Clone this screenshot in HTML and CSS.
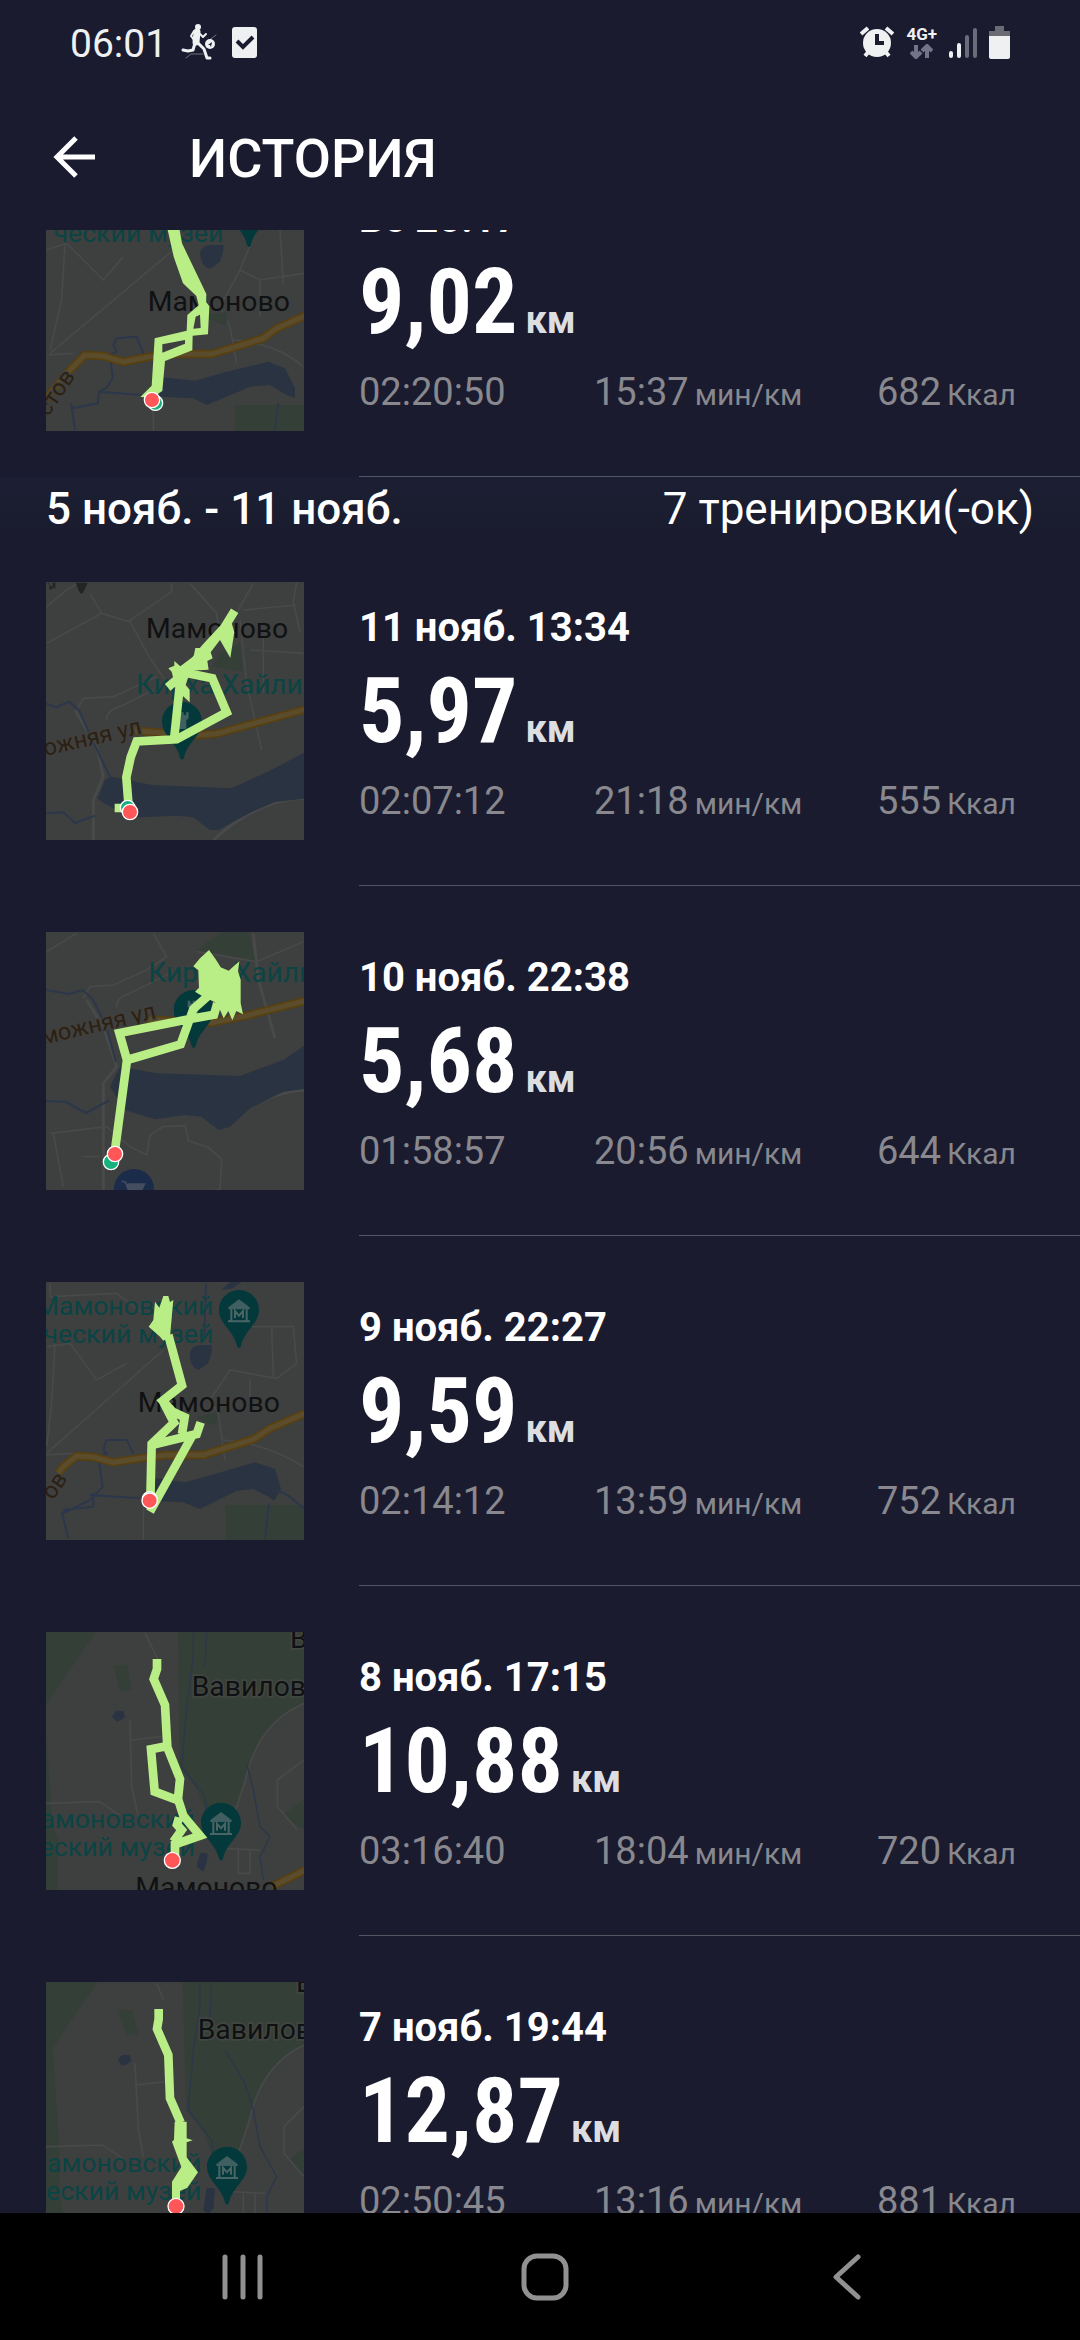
FILE: index.html
```html
<!DOCTYPE html>
<html lang="ru">
<head>
<meta charset="utf-8">
<meta name="viewport" content="width=device-width, initial-scale=1">
<title>История</title>
<link rel="stylesheet" href="styles.css">
</head>
<body>
<svg class="defs" aria-hidden="true">
  <defs>
    <symbol id="museum" viewBox="0 0 120 176">
      <path class="pin" d="M60 0C27 0 0 27 0 60c0 42 45 62 54 108q6 12 12 0C75 122 120 102 120 60 120 27 93 0 60 0z"/>
      <path class="pin-line" d="M27 94h66M37 92V56M83 92V56M48 84V63l12 14 12-14v21"/>
      <path class="pin-fill" d="M60 28 92 52v6H28v-6z"/>
    </symbol>
    <symbol id="rook" viewBox="0 0 120 176">
      <path class="pin" d="M60 0C27 0 0 27 0 60c0 42 45 62 54 108q6 12 12 0C75 122 120 102 120 60 120 27 93 0 60 0z"/>
      <path class="pin-fill" d="M42 32h8v8h7v-8h8v8h7v-8h8v18l-7 6v26H49V56l-7-6z"/>
    </symbol>
  </defs>
</svg>

<header class="top">
  <div class="status">
    <span class="clock">06:01</span>
    <svg class="i-run" viewBox="0 0 36 36" aria-hidden="true">
      <g fill="none" stroke="#eef0f2" stroke-linecap="round" stroke-linejoin="round">
        <path d="M16 8 15 18" stroke-width="7"/>
        <path d="m13 7-3 5 3 4M19 10l3 3 3-3" stroke-width="2"/>
        <path d="m17 19 6 6 3 9h3" stroke-width="3"/>
        <path d="m14 19-2 7-5 1-5-1" stroke-width="3"/>
        <path d="m27 17 8-6M5 34l5-4h12" stroke-width="1" opacity=".4"/>
      </g>
      <circle cx="17" cy="3" r="3" fill="#eef0f2"/>
      <circle cx="29" cy="20" r="5" fill="#eef0f2"/>
      <path d="m27 21 4-3-1 5-1-2z" fill="#1a1b2e"/>
    </svg>
    <svg class="i-check" viewBox="0 0 25 31" aria-hidden="true">
      <rect width="25" height="31" rx="3" fill="#eef0f2"/>
      <path d="m5 14 6 6L21 10" fill="none" stroke="#1a1b2e" stroke-width="4"/>
    </svg>
    <div class="status-right">
      <svg class="i-alarm" viewBox="0 0 34 32" aria-hidden="true">
        <g stroke="#eef0f2" stroke-width="4" fill="none"><path d="m1 8 7-6M26 2l7 6M5 30l5-6M29 30l-5-6"/></g>
        <circle cx="17" cy="17" r="14" fill="#eef0f2"/>
        <path d="M17 8v9h7" fill="none" stroke="#1a1b2e" stroke-width="4"/>
      </svg>
      <span class="net">4G+
        <svg class="i-updown" viewBox="0 0 23 15" aria-hidden="true"><path d="M6 1v12M1 8l5 5 5-5M17 14V2M12 7l5-5 5 5" fill="none" stroke="#73748a" stroke-width="4"/></svg>
      </span>
      <svg class="i-signal" viewBox="0 0 28 31" aria-hidden="true">
        <g stroke-width="4" stroke-linecap="round"><path d="M2 26v3M10 18v11" stroke="#eef0f2"/><path d="M18 10v19M26 3v26" stroke="#6b6b7b"/></g>
      </svg>
      <svg class="i-battery" viewBox="0 0 21 33" aria-hidden="true">
        <path d="M6 0h9v5h6v6H0V5h6z" fill="#6b6b75"/>
        <path d="M0 10h21v21q0 2-2 2H2q-2 0-2-2z" fill="#eef0f2"/>
      </svg>
    </div>
  </div>
  <div class="toolbar">
    <button class="back" type="button" aria-label="Назад">
      <svg viewBox="0 0 42 42"><path d="M42 21H4M23 2 4 21l19 19" fill="none" stroke="#fff" stroke-width="5"/></svg>
    </button>
    <h1>ИСТОРИЯ</h1>
  </div>
</header>

<main class="viewport">
  <div class="scrolled">
    <ul class="list">
      <li class="row">
        <svg class="map" viewBox="48 -141 774 774" role="img" aria-label="Маршрут">
          <g class="road"><path d="M105 70 95 240 60 390M50 90l60-20 110 110 60-70M430 90 60 400M680 30l-50 120 60 30 130-20M750 30l10 160M630 150l-60 110 30 60 20 110M690 180v110M610 360q130 10 210 80M370 540v100M50 405l80-5"/></g>
          <path class="water" d="M510 100q5-25 35-25h35v15l-10 35-30 22q-28-10-30-47zM385 470l110 12 90-25 130-32 50 20 30 60v30l-25-10-50-30-60 5-130 55-40-20-100-5z"/>
          <path class="park" d="M615 555h207v78H615zM530 285l60-10v40q-40-5-60-30z"/>
          <path class="river" d="M340 400l-20-50-60 5-10 20 10 20-20 10 8 70-20 30-20 10-5 35-75 15-5-15 12 80M205 515l130 10M745 550l-10 80"/>
          <path class="edge" d="M40 545 120 450 165 405 220 408 280 426 360 410 440 402H545L700 355 740 325 830 285"/>
          <path class="yellow" d="M40 545 120 450 165 405 220 408 280 426 360 410 440 402H545L700 355 740 325 830 285"/>
          <text class="teal" x="580" y="66" text-anchor="end">ческий музей</text>
          <use href="#museum" x="597" y="-93" width="120" height="176"/>
          <text class="town" x="353" y="272">Мамоново</text>
          <text class="street" x="54" y="592" transform="rotate(-56 54 592)">стов</text>
          <path class="fill" d="M412 25h36l8 45 73 152v25l9 12-4 84-46 4-1 44-82 32-8 90-32 20-34-2 34-34 9-142 96-23 2-47 34-29-7-28-40-38-28-80z"/>
          <path class="hole" d="m497 290 13-6 2 40-22 2zM397 373l68-13v11l-68 27z"/>
          <circle class="start" cx="376" cy="549" r="22"/><circle class="stop" cx="366" cy="540" r="23"/>
        </svg>
        <div class="info">
          <h2>Вс 20:17</h2>
          <p class="dist"><b>9,02</b> <span>км</span></p>
          <div class="stats"><span>02:20:50</span><span>15:37 <small>мин/км</small></span><span>682 <small>Ккал</small></span></div>
        </div>
      </li>
    </ul>
    <div class="week"><strong>5 нояб. - 11 нояб.</strong><span>7 тренировки(-ок)</span></div>
    <ul class="list">
      <li class="row">
        <svg class="map" viewBox="48 36 774 774" role="img" aria-label="Маршрут">
          <g class="road"><path d="M50 110 110 60 145 40M180 70l35 60-165 90M215 130l80 25 130-90V40M300 155l60 110 70 100M480 40l80 90 10 70M670 40 580 200M640 120l160-15M800 36l-10 60 20 90M630 150l20 190 45 200M660 240l160 10M700 200v170M140 420l20-35 90-5 130-60M230 450q0-30 40-40l100-50"/></g>
          <path class="thick" d="M135 420 200 530l20 90-30 70v120M550 810q130-120 272-125"/>
          <path class="park" d="M570 250l60-30 8 85-90-15z"/>
          <path class="water" d="M205 680l20-50 20-10 120 25 240 10 130-60 87-47v138l-87 10-70 30-100 54h-25l-50-38-50-5-110 5q-100-27-130-60z"/>
          <path class="river" d="M48 400l30 12 40-17 30 27 35 80 60 125M50 730l50-3 35 32 60-22"/>
          <path class="edge" d="M310 482l190 14 60-5 270-74"/><path class="yellow" d="M310 482l190 14 60-5 270-74"/>
          <path class="ink" d="M50 40h8v18h10V38h8v18M137 38h36q-6 14-14 30-8 6-12-4z"/>
          <text class="town" x="348" y="204">Мамоново</text>
          <text class="teal big" x="318" y="372">Кирха Хайли</text>
          <text class="street" x="46" y="558" transform="rotate(-13 46 558)">ожняя ул</text>
          <use href="#rook" x="396" y="395" width="120" height="176"/>
          <path class="route" d="M614 122 582 174 526 234 470 304 413 352M470 309l77 16 43 102-150 81-120 6-18 48-13 60 6 76M450 340 433 500M254 714h30"/>
          <path class="fill" d="M565 175l40-15 8 25-12 79-31-54-28 37 6 18-16 8 4 26-76 4 15 18-8 24 12 14v38l-26-24-16-20-12-48-10-10 18-8v-14l18 16 40-30 5-25h18l36-40z"/>
          <circle class="start" cx="293" cy="713" r="22"/><circle class="stop" cx="300" cy="726" r="23"/>
        </svg>
        <div class="info">
          <h2>11 нояб. 13:34</h2>
          <p class="dist"><b>5,97</b> <span>км</span></p>
          <div class="stats"><span>02:07:12</span><span>21:18 <small>мин/км</small></span><span>555 <small>Ккал</small></span></div>
        </div>
      </li>
      <li class="row">
        <svg class="map" viewBox="48 36 774 774" role="img" aria-label="Маршрут">
          <g class="road"><path d="M50 95 140 40M370 40l40 70-60 40-100 45-70 5-20 35M500 95l180 30 140-60M260 260q0-30 40-40l120-60M60 640l170-20 70 60 50 25 10-60 40-25 65-3 10 45 60 20 40 35-5 90-60 20M70 640l30 160M160 710h50"/></g>
          <path class="thick" d="M170 240l50 80 40 120-40 50v320M670 40l15 140 50 175M550 620q150-100 272-110"/>
          <path class="park" d="M500 90l75-54h80l20 85z"/>
          <path class="water" d="M240 500l30-60 110 20 250 8 130-48 62-43v130l-62 8-100 50-60 55-35 10-50-40-50-5-90 13-90-28z"/>
          <path class="river" d="M48 210l70 12 40-12 30 27 40 80 30 110M48 543l60 3 60 33 70-38"/>
          <path class="edge" d="M345 298l200 10 100-20 190-48"/><path class="yellow" d="M345 298l200 10 100-20 190-48"/>
          <text class="teal big" x="355" y="185">Кирха Хайли</text>
          <text class="street" x="38" y="374" transform="rotate(-13 38 374)">можняя ул</text>
          <use href="#rook" x="431" y="210" width="120" height="176"/>
          <circle class="shop" cx="312" cy="807" r="60"/>
          <path class="cart" d="M275 783l12 4 8 23h40l8-18h-50"/>
          <path class="route" d="M255 690 291 420 268 339 480 297 552 284 562 250M291 420l161-47 38-106 70-62"/>
          <path class="fill" d="M537 90l20 28 15 24 24 10 32-28-4 30 8 25v70l7 34-20-10-12 28-12-28-14 22-12-28-14-20-40-20-20-12 12-12-2-52-15-12 20-24z"/>
          <circle class="start" cx="243" cy="726" r="23"/><circle class="stop" cx="255" cy="702" r="23"/>
        </svg>
        <div class="info">
          <h2>10 нояб. 22:38</h2>
          <p class="dist"><b>5,68</b> <span>км</span></p>
          <div class="stats"><span>01:58:57</span><span>20:56 <small>мин/км</small></span><span>644 <small>Ккал</small></span></div>
        </div>
      </li>
      <li class="row">
        <svg class="map" viewBox="48 36 774 774" role="img" aria-label="Маршрут">
          <g class="road"><path d="M75 220 65 400 50 530M50 230l70-10 80 110 90-50M400 240 50 550M640 170h150l10 110-60 45-140-25-60 90 25 40 20 140M660 330v100M725 170l5 150M580 510q130 10 240 80M340 690v120M48 555l80-5M60 40v40l200-10 80 60"/></g>
          <path class="water" d="M575 60l25-24h35l-30 20zM480 250q5-25 35-25h30v20l-10 35-30 20q-28-10-25-50zM355 622l110 15 90-25 120-35 60 20 18 60-20 35-15-10-48-25-50 5-110 55-50-20-105-5z"/>
          <path class="park" d="M587 705h235v105H587zM500 440l60-10v35q-40-5-60-25z"/>
          <path class="river" d="M310 550l-20-40-60 0-10 30 10 10-25 10 13 90-38 40-80 40 10-15M180 675l150 10M95 725l20 80M740 660l40 20 40 35M717 700l-12 105M528 40l-5 160M190 670v40l-90 10"/>
          <path class="edge" d="M85 610 100 590 140 558 190 561 250 577 330 565 410 555H520L670 508 720 475 830 428"/>
          <path class="yellow" d="M85 610 100 590 140 558 190 561 250 577 330 565 410 555H520L670 508 720 475 830 428"/>
          <text class="teal" x="550" y="136" text-anchor="end">Мамоновский</text>
          <text class="teal" x="550" y="220" text-anchor="end">ческий музей</text>
          <use href="#museum" x="567" y="60" width="120" height="176"/>
          <text class="town" x="323" y="425">Мамоново</text>
          <text class="street" x="69" y="692" transform="rotate(-56 69 692)">ов</text>
          <path class="route" d="M415 195 456 346 398 392 428 425 464 442 456 492M398 392 432 458 365 522 361 690M365 525 500 492 512 457M360 725 488 495"/>
          <path class="fill" d="M375 95l13 18 12-35h15l5 18 10-6-10 110-20 12-10-12-34-30 14-20z"/>
          <circle class="start" cx="359" cy="687" r="22"/><circle class="stop" cx="359" cy="692" r="23"/>
        </svg>
        <div class="info">
          <h2>9 нояб. 22:27</h2>
          <p class="dist"><b>9,59</b> <span>км</span></p>
          <div class="stats"><span>02:14:12</span><span>13:59 <small>мин/км</small></span><span>752 <small>Ккал</small></span></div>
        </div>
      </li>
      <li class="row">
        <svg class="map" viewBox="48 36 774 774" role="img" aria-label="Маршрут">
          <path class="park" d="M48 36h150l-90 130-60 90zM444 36h378v210q-130 60-180 230l-25 80-88 25-25-70-55-70zM48 350l15 180v80l20 50v150H48zM250 135h40l15 75-35 2zM760 585l62-45v90z"/>
          <g class="road"><path d="M300 300l5 200 20 90M305 360l90-10M822 250q-140 60-175 230l-30 90M345 40l45 90M48 550l160-5 60 40M822 420l-80 60v80l60 70M690 690l-100-5M625 690v70h35v-70"/></g>
          <path class="water" d="M246 290l12-18 22 2 5 18-12 8-12 5zM510 700h22v20l-12 35-20-15z"/>
          <path class="river thin" d="M490 40v70l-20 150-15 180 70 90 10 60M650 430l20 80 20 110 30 30-30 60 10 70M530 40l-5 100"/>
          <path class="edge" d="M725 800l105-52"/><path class="yellow" d="M725 800l105-52"/>
          <text class="town halo" x="485" y="228">Вавилово</text>
          <text class="town halo" x="780" y="84">В</text>
          <text class="teal" x="495" y="625" text-anchor="end">Мамоновский</text>
          <text class="teal" x="495" y="709" text-anchor="end">ческий музей</text>
          <text class="town" x="316" y="830">Мамоново</text>
          <use href="#museum" x="513" y="548" width="120" height="176"/>
          <path class="route" d="M381 117v30l-10 30 34 78 7 127 38 95-6 60 16 50 50 60-75 26v40M412 378l-49 10 11 127 75 28M447 592l-6 22 14 16-25 35"/>
          <circle class="stop" cx="427" cy="721" r="24"/>
        </svg>
        <div class="info">
          <h2>8 нояб. 17:15</h2>
          <p class="dist"><b>10,88</b> <span>км</span></p>
          <div class="stats"><span>03:16:40</span><span>18:04 <small>мин/км</small></span><span>720 <small>Ккал</small></span></div>
        </div>
      </li>
      <li class="row">
        <svg class="map" viewBox="48 36 774 774" role="img" aria-label="Маршрут">
          <path class="park" d="M48 36h155l-90 130-45 70 20 300v120l20 154H48zM458 36h364v190q-130 60-170 230l-25 80-78 30-25-75-55-70zM265 120h40l20 72-35 2zM778 570l44-35v80z"/>
          <g class="road"><path d="M315 280l10 200 15 80M315 345l95-10M822 225q-130 60-165 230l-30 90M380 40l20 50M48 530l170-5 60 40M822 410l-60 60v80l60 70M705 670l-100-5M640 670v70h35v-70"/></g>
          <path class="water" d="M264 270l12-16 24 2 3 18-14 10-14 3zM530 655h25l-5 60-15 18-15-13z"/>
          <path class="river thin" d="M510 40v70l-20 130-15 180 70 90 10 60M585 240l60 100 25 80 20 110 50 90-30 60v100M545 40l-5 100"/>
          <text class="town halo" x="503" y="208">Вавилово</text>
          <text class="town halo" x="798" y="65">В</text>
          <text class="teal" x="514" y="607" text-anchor="end">Мамоновский</text>
          <text class="teal" x="514" y="691" text-anchor="end">ческий музей</text>
          <use href="#museum" x="531" y="530" width="120" height="176"/>
          <path class="route" d="M386 117v30l-5 30 34 78 5 130 32 73"/>
          <path class="fill" d="M434 455h36v50l18 6-18 6v45l34 45-32 46-22 10v30h-24v-58l28-44-28-76 6-6z"/>
          <circle class="stop" cx="438" cy="709" r="24"/>
        </svg>
        <div class="info">
          <h2>7 нояб. 19:44</h2>
          <p class="dist"><b>12,87</b> <span>км</span></p>
          <div class="stats"><span>02:50:45</span><span>13:16 <small>мин/км</small></span><span>881 <small>Ккал</small></span></div>
        </div>
      </li>
    </ul>
  </div>
</main>

<nav class="sysnav">
  <button type="button" aria-label="Недавние"><svg viewBox="0 0 48 48"><path d="M6 4v40M24 4v40M41 4v40"/></svg></button>
  <button type="button" aria-label="Домой"><svg viewBox="0 0 48 48"><rect x="3" y="3" width="42" height="42" rx="13"/></svg></button>
  <button type="button" aria-label="Назад"><svg viewBox="0 0 48 48"><path d="M35 4 13 24l22 20"/></svg></button>
</nav>
</body>
</html>
```

FILE: styles.css
```css
* { box-sizing: border-box; }

body {
  margin: 0;
  height: 100vh;
  display: flex;
  flex-direction: column;
  overflow: hidden;
  background: #1a1b2e;
  color: #fff;
  font-family: Roboto, "Noto Sans", sans-serif;
}

h1, h2, p, ul { margin: 0; padding: 0; }
ul { list-style: none; }
svg { display: block; }
button { border: 0; padding: 0; background: none; }
.defs { display: none; }

/* Status bar and toolbar */
.top { flex: none; }

.status {
  height: 84px;
  padding: 0 70px;
  display: flex;
  align-items: center;
  color: #eef0f2;
}
.clock { padding-top: 4px; margin-right: 14px; font-size: 39px; line-height: 48px; }
.i-run { width: 36px; height: 36px; margin-right: 15px; }
.i-check { width: 25px; height: 31px; }
.status-right { margin-left: auto; display: flex; align-items: center; gap: 12px; }
.i-alarm { width: 34px; height: 32px; }
.net { display: flex; flex-direction: column; align-items: center; gap: 2px; font-size: 17px; line-height: 16px; font-weight: 700; }
.i-updown { width: 23px; height: 15px; }
.i-signal { width: 28px; height: 31px; }
.i-battery { width: 21px; height: 33px; }

.toolbar {
  height: 146px;
  padding: 0 53px;
  display: flex;
  align-items: center;
  gap: 94px;
}
.back svg { width: 42px; height: 42px; }
.toolbar h1 { padding-top: 4px; font-size: 54px; line-height: 64px; font-weight: 500; }

/* Scrolled history */
.viewport { flex: 1; min-height: 0; overflow: hidden; }
.scrolled { margin-top: -103px; }

.week {
  height: 59px;
  padding: 4px 46px 0;
  display: flex;
  justify-content: space-between;
  align-items: center;
  background: linear-gradient(#1c1f33, #1a1b2e);
  font-size: 44px;
  line-height: 52px;
}
.week strong { font-weight: 500; }

.row { display: flex; height: 350px; padding-left: 46px; gap: 55px; }
.map { flex: none; width: 258px; height: 258px; margin-top: 46px; background: #3e3f3f; }
.info { flex: 1; padding-top: 68px; border-bottom: 1px solid #555663; }
.info h2 { font-size: 40px; line-height: 48px; font-weight: 700; }
.dist { display: flex; align-items: baseline; gap: 8px; margin-top: 12px; line-height: 96px; }
.dist b { font-family: "Roboto Condensed", "Liberation Sans Narrow", Roboto, sans-serif; font-size: 90px; }
.dist span { font-size: 38px; font-weight: 700; color: #dddee2; }
.stats {
  display: grid;
  grid-template-columns: 235fr 283fr 203fr;
  font-size: 38px;
  line-height: 48px;
  color: #88888e;
}
.stats span { display: flex; align-items: baseline; gap: 6px; }
.stats small { font-size: 30px; }

/* Route thumbnails */
.road { fill: none; stroke: #484949; stroke-width: 5; }
.thick { fill: none; stroke: #484949; stroke-width: 9; }
.park { fill: #343f38; }
.water { fill: #2a3342; }
.river { fill: none; stroke: #2c374c; stroke-width: 6; }
.river.thin { stroke-width: 4; }
.edge { fill: none; stroke: #58400f; stroke-width: 25; }
.yellow { fill: none; stroke: #5b4c2c; stroke-width: 15; }
.town { font-size: 85px; fill: #101112; }
.halo { paint-order: stroke; stroke: #414642; stroke-width: 10; }
.teal { font-size: 80px; fill: #0b4444; }
.teal.big { font-size: 84px; }
.street { font-size: 70px; fill: #2c2013; paint-order: stroke; stroke: #40403e; stroke-width: 8; }
.ink { fill: #232425; }
.pin { fill: #04393b; }
.pin-fill { fill: #3f5f60; }
.pin-line { fill: none; stroke: #4a6566; stroke-width: 6; }
.shop { fill: #1b2b4a; }
.cart { fill: #444e60; stroke: #444e60; stroke-width: 5; }
.fill { fill: #b9ed86; }
.route { fill: none; stroke: #b9ed86; stroke-width: 26; }
.hole { fill: #3e3f3f; }
.start { fill: #17b07f; stroke: #fff; stroke-width: 4; }
.stop { fill: #ff5757; stroke: #fff; stroke-width: 4; }

/* System navigation */
.sysnav {
  flex: none;
  height: 127px;
  padding: 0 82px 0 92px;
  display: flex;
  align-items: center;
  background: #000;
}
.sysnav button { flex: 1; display: flex; justify-content: center; }
.sysnav svg { width: 48px; height: 48px; fill: none; stroke: #919191; stroke-width: 5; stroke-linecap: round; stroke-linejoin: round; }
```
